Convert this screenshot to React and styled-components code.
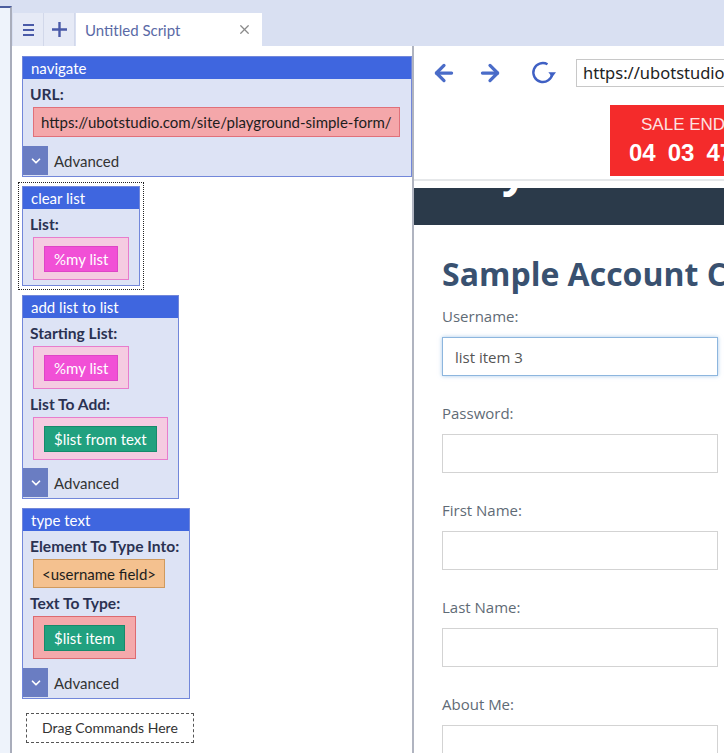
import React from "react";
import styled, { createGlobalStyle } from "styled-components";
import { ArrowLeft, ArrowRight, ChevronDown, X } from "lucide-react";

const GlobalStyle = createGlobalStyle`
  html, body {
    margin: 0;
    padding: 0;
  }
  body {
    background: #d9e0f2;
    font-family: "Lato", "Noto Sans", sans-serif;
    overflow: hidden;
  }
`;

const Root = styled.div`
  display: flex;
  width: 724px;
  height: 753px;
  overflow: hidden;
  background: #d9e0f2;
`;

const SideStrip = styled.div`
  width: 10px;
  margin-top: 6px;
  border-top: 2px solid #4b5d9e;
  border-right: 2px solid #a9adbb;
  background: #eef3fb;
`;

const Main = styled.div`
  flex: 1;
  display: flex;
  flex-direction: column;
  min-width: 0;
`;

const TabBar = styled.div`
  display: flex;
  height: 33px;
  margin-top: 13px;
  padding-left: 1px;
`;

const TabButton = styled.div`
  width: 30px;
  display: flex;
  align-items: center;
  justify-content: center;
  background: #e6eaf6;
  border-right: 1px solid #d2d8ea;
`;

const Tab = styled.div`
  width: 186px;
  box-sizing: border-box;
  margin-left: 1px;
  padding: 0 10px 0 9px;
  display: flex;
  align-items: center;
  justify-content: space-between;
  background: #fff;
  color: #5a6aa6;
  font-size: 15px;
`;

const Workspace = styled.div`
  flex: 1;
  display: flex;
  min-height: 0;
`;

const ScriptPanel = styled.div`
  width: 402px;
  box-sizing: border-box;
  padding: 10px 0 0 10px;
  background: #fff;
  border-right: 2px solid #b0b4c0;
`;

const Stack = styled.div`
  display: flex;
  flex-direction: column;
  align-items: flex-start;
  gap: 9px;
`;

const Block = styled.div`
  align-self: ${(p) => (p.$stretch ? "stretch" : "flex-start")};
  display: flex;
  flex-direction: column;
  align-items: flex-start;
  background: #dde3f5;
  border: 1px solid #7287da;
`;

const BlockHeader = styled.div`
  align-self: stretch;
  height: 22px;
  line-height: 22px;
  padding: 0 8px;
  background: #3f66df;
  color: #fff;
  font-size: 15px;
  white-space: nowrap;
`;

const Body = styled.div`
  display: flex;
  flex-direction: column;
  align-items: flex-start;
  padding: 0 10px ${(p) => p.$bottom ?? 8}px 10px;
`;

const Label = styled.div`
  margin: 5px 0 0 -3px;
  line-height: 20px;
  font-size: 15.6px;
  font-weight: 700;
  color: #2b3252;
  white-space: nowrap;
`;

const slotTones = {
  url: { bg: "#f4a7aa", border: "#e0707a", pad: "0 7px", h: "30px" },
  list: { bg: "#f5cbe1", border: "#e87ccc", pad: "8px 10px 7px", h: "auto" },
  element: { bg: "#f4c18f", border: "#cf9a5e", pad: "0 8px", h: "29px" },
  text: { bg: "#f4a9ab", border: "#dd6a70", pad: "8px 10px 7px", h: "auto" },
};

const Slot = styled.div`
  margin-top: 3px;
  display: inline-flex;
  align-items: center;
  box-sizing: border-box;
  height: ${(p) => slotTones[p.$kind].h};
  padding: ${(p) => slotTones[p.$kind].pad};
  background: ${(p) => slotTones[p.$kind].bg};
  border: 1px solid ${(p) => slotTones[p.$kind].border};
  color: #1d1d1d;
  font-size: 15px;
  white-space: nowrap;
`;

const Chip = styled.span`
  display: inline-block;
  height: 24px;
  line-height: 24px;
  padding: 0 9px;
  color: #fff;
  font-size: 15px;
  white-space: nowrap;
  background: ${(p) => (p.$tone === "green" ? "#21a17f" : "#f150d6")};
  border: 1px solid ${(p) => (p.$tone === "green" ? "#178a6b" : "#de46c6")};
`;

const Advanced = styled.div`
  display: flex;
  align-items: center;
  height: 29px;
  margin-bottom: 1px;
  color: #333;
  font-size: 15px;
`;

const AdvIcon = styled.div`
  width: 25px;
  height: 29px;
  display: flex;
  align-items: center;
  justify-content: center;
  background: #6a7dc2;
  margin-right: 6px;
`;

const Selected = styled.div`
  margin: -4px 0 -4px -4px;
  padding: 3px;
  border: 1px dotted #222;
`;

const DropZone = styled.div`
  margin: 5px 0 0 4px;
  padding: 0 15px;
  height: 30px;
  line-height: 28px;
  box-sizing: border-box;
  border: 1px dashed #555;
  color: #333;
  font-size: 14px;
`;

const BrowserPanel = styled.div`
  flex: 1;
  min-width: 0;
  background: #fff;
  overflow: hidden;
`;

const Toolbar = styled.div`
  display: flex;
  align-items: center;
  height: 54px;
  padding-left: 17px;
  color: #4a6cc8;
`;

const NavIcon = styled.div`
  display: flex;
  margin-right: ${(p) => p.$gap}px;
`;

const UrlBox = styled.div`
  flex: 0 0 320px;
  height: 28px;
  line-height: 26px;
  box-sizing: border-box;
  padding: 0 6px;
  border: 1px solid #c8c8c8;
  color: #222;
  font-family: "Noto Sans", sans-serif;
  font-size: 16.5px;
  white-space: nowrap;
`;

const TopBar = styled.div`
  padding: 5px 0 3px 196px;
  border-bottom: 2px solid #e6e8ea;
  margin-bottom: 7px;
`;

const Banner = styled.div`
  width: 220px;
  height: 71px;
  box-sizing: border-box;
  padding-top: 10px;
  background: #f42b2b;
  font-family: "Liberation Sans", Arial, sans-serif;
`;

const BannerTitle = styled.div`
  padding-left: 31px;
  color: #fde2e2;
  font-size: 17px;
  line-height: 20px;
  white-space: nowrap;
`;

const Digits = styled.div`
  display: flex;
  gap: 12px;
  padding-left: 19px;
  margin-top: 4px;
  color: #fff;
  font-size: 24px;
  font-weight: 700;
  line-height: 28px;
`;

const DarkHeader = styled.div`
  height: 37px;
  overflow: hidden;
  padding-left: 88px;
  background: #2b3a4a;
`;

const Logo = styled.div`
  margin-top: -49px;
  color: #fff;
  font-family: "Open Sans", sans-serif;
  font-size: 44px;
  font-weight: 700;
  letter-spacing: 2px;
`;

const Form = styled.div`
  padding-left: 28px;
  font-family: "Open Sans", sans-serif;
`;

const Heading = styled.h1`
  margin: 29px 0 0;
  line-height: 40px;
  font-size: 32px;
  font-weight: 700;
  color: #395170;
  white-space: nowrap;
`;

const Field = styled.div`
  margin-top: ${(p) => (p.$first ? 12 : 27)}px;
`;

const FieldLabel = styled.div`
  line-height: 20px;
  font-size: 15px;
  color: #5f6b76;
`;

const Input = styled.input`
  display: block;
  margin-top: 11px;
  width: 276px;
  height: 39px;
  box-sizing: border-box;
  padding: 0 12px;
  border: 1px solid ${(p) => (p.$focused ? "#8db6de" : "#d3d3d3")};
  box-shadow: ${(p) => (p.$focused ? "0 0 4px rgba(110, 165, 220, 0.6)" : "none")};
  font-family: "Open Sans", sans-serif;
  font-size: 15px;
  color: #555;
  outline: none;
`;

const MenuIcon = () => (
  <svg width="11" height="12" viewBox="0 0 11 12">
    <rect x="0" y="0" width="11" height="2" fill="#4a5aa8" />
    <rect x="0" y="5" width="11" height="2" fill="#4a5aa8" />
    <rect x="0" y="10" width="11" height="2" fill="#4a5aa8" />
  </svg>
);

const PlusIcon = () => (
  <svg width="15" height="15" viewBox="0 0 15 15">
    <path d="M7.5 0v15M0 7.5h15" stroke="#4a5aa8" strokeWidth="2.4" />
  </svg>
);

const RefreshIcon = () => (
  <svg width="26" height="26" viewBox="0 0 26 26">
    <path
      d="M17.5 4.2A9.5 9.5 0 1 0 22.3 13.5"
      fill="none"
      stroke="#3f60c4"
      strokeWidth="2.4"
    />
    <path d="M18.4 12.2h7.6l-3.8 5z" fill="#3f60c4" />
  </svg>
);

const AdvancedRow = () => (
  <Advanced>
    <AdvIcon>
      <ChevronDown size={14} color="#fff" strokeWidth={3} />
    </AdvIcon>
    Advanced
  </Advanced>
);

const fields = ["Username:", "Password:", "First Name:", "Last Name:", "About Me:"];

export default function App() {
  return (
    <Root>
      <GlobalStyle />
      <SideStrip />
      <Main>
        <TabBar>
          <TabButton>
            <MenuIcon />
          </TabButton>
          <TabButton>
            <PlusIcon />
          </TabButton>
          <Tab>
            Untitled Script
            <X size={15} color="#8a8a8a" strokeWidth={2} />
          </Tab>
        </TabBar>
        <Workspace>
          <ScriptPanel>
            <Stack>
              <Block $stretch>
                <BlockHeader>navigate</BlockHeader>
                <Body $bottom={9}>
                  <Label>URL:</Label>
                  <Slot $kind="url">https://ubotstudio.com/site/playground-simple-form/</Slot>
                </Body>
                <AdvancedRow />
              </Block>

              <Selected>
                <Block>
                  <BlockHeader>clear list</BlockHeader>
                  <Body $bottom={5}>
                    <Label>List:</Label>
                    <Slot $kind="list">
                      <Chip>%my list</Chip>
                    </Slot>
                  </Body>
                </Block>
              </Selected>

              <Block>
                <BlockHeader>add list to list</BlockHeader>
                <Body $bottom={8}>
                  <Label>Starting List:</Label>
                  <Slot $kind="list">
                    <Chip>%my list</Chip>
                  </Slot>
                  <Label>List To Add:</Label>
                  <Slot $kind="list">
                    <Chip $tone="green">$list from text</Chip>
                  </Slot>
                </Body>
                <AdvancedRow />
              </Block>

              <Block>
                <BlockHeader>type text</BlockHeader>
                <Body $bottom={9}>
                  <Label>Element To Type Into:</Label>
                  <Slot $kind="element">&lt;username field&gt;</Slot>
                  <Label>Text To Type:</Label>
                  <Slot $kind="text">
                    <Chip $tone="green">$list item</Chip>
                  </Slot>
                </Body>
                <AdvancedRow />
              </Block>

              <DropZone>Drag Commands Here</DropZone>
            </Stack>
          </ScriptPanel>

          <BrowserPanel>
            <Toolbar>
              <NavIcon $gap={20}>
                <ArrowLeft size={26} strokeWidth={3} />
              </NavIcon>
              <NavIcon $gap={27}>
                <ArrowRight size={26} strokeWidth={3} />
              </NavIcon>
              <NavIcon $gap={20}>
                <RefreshIcon />
              </NavIcon>
              <UrlBox>https://ubotstudio.com/site/playground-simple-form/</UrlBox>
            </Toolbar>

            <TopBar>
              <Banner>
                <BannerTitle>SALE ENDS IN</BannerTitle>
                <Digits>
                  <span>04</span>
                  <span>03</span>
                  <span>47</span>
                  <span>12</span>
                </Digits>
              </Banner>
            </TopBar>
            <DarkHeader>
              <Logo>yo</Logo>
            </DarkHeader>

            <Form>
              <Heading>Sample Account Creation</Heading>
              {fields.map((f, i) => (
                <Field key={f} $first={i === 0}>
                  <FieldLabel>{f}</FieldLabel>
                  <Input
                    readOnly
                    $focused={i === 0}
                    defaultValue={i === 0 ? "list item 3" : ""}
                  />
                </Field>
              ))}
            </Form>
          </BrowserPanel>
        </Workspace>
      </Main>
    </Root>
  );
}
